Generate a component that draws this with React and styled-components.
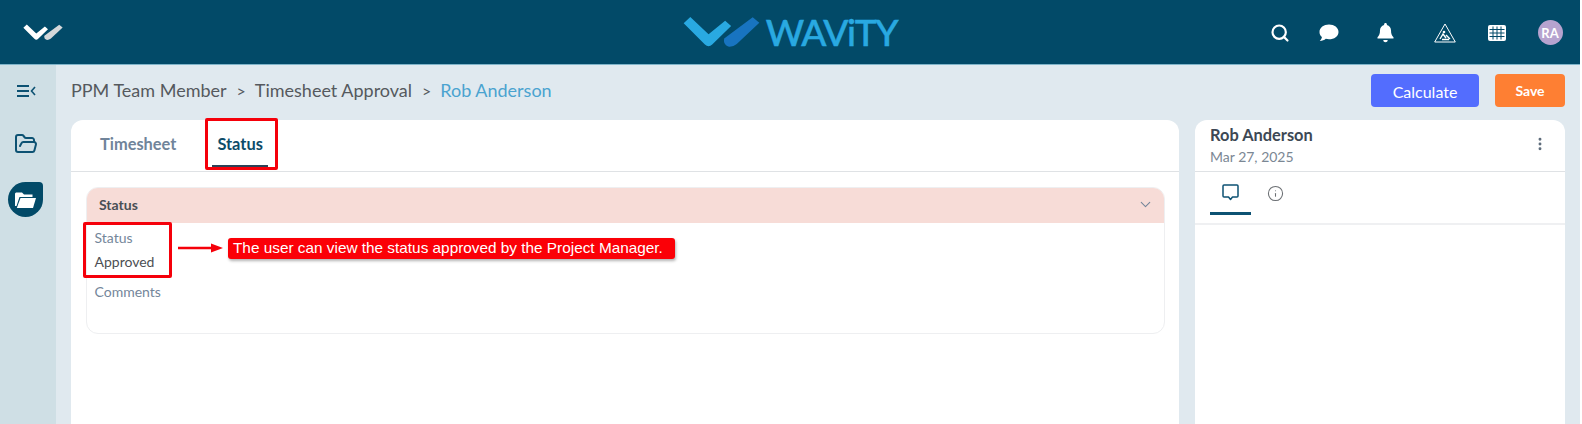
import React from "react";
import styled, { createGlobalStyle } from "styled-components";
import { Search, EllipsisVertical, ChevronDown, Info, FolderOpen } from "lucide-react";

const Global = createGlobalStyle`
  html, body { margin: 0; padding: 0; background: #fff; overflow: hidden; }
  body { font-family: Lato, "Open Sans", sans-serif; }
  * { box-sizing: border-box; }
`;

const Page = styled.div`
  position: relative;
  width: 1580px;
  height: 424px;
  overflow: hidden;
  display: flex;
  flex-direction: column;
`;
const TopBar = styled.header`
  flex: none;
  height: 65px;
  background: #024a68;
  border-bottom: 1px solid #7fb4c9;
  display: grid;
  grid-template-columns: 1fr auto 1fr;
  align-items: center;
`;
const Brand = styled.div`
  display: flex;
  padding-left: 23px;
`;
const CenterLogo = styled.div`
  display: flex;
  align-items: center;
  gap: 6px;
`;
const Word = styled.span`
  font-size: 37px;
  line-height: 40px;
  font-weight: 500;
  color: #29a9e1;
  letter-spacing: -1.3px;
  -webkit-text-stroke: 0.5px #29a9e1;
`;
const TopIcons = styled.div`
  display: flex;
  justify-content: flex-end;
  align-items: center;
`;
const TopSlot = styled.div`
  width: ${(p) => p.$w}px;
  display: flex;
  justify-content: center;
  align-items: center;
  color: #fff;
  padding-top: 1px;
`;
const Avatar = styled.div`
  width: 25px;
  height: 25px;
  border-radius: 50%;
  background: #b6a3cf;
  color: #fff;
  font-size: 13px;
  font-weight: 700;
  display: flex;
  align-items: center;
  justify-content: center;
`;
const Body = styled.div`
  flex: 1;
  display: flex;
  min-height: 0;
`;
const Side = styled.aside`
  flex: none;
  width: 56px;
  background: #cfdfe5;
  display: flex;
  flex-direction: column;
  align-items: center;
  color: #0d5273;
  padding: 17px 0 0 0;
`;
const SideItem = styled.div`
  height: ${(p) => p.$h}px;
  display: flex;
  align-items: center;
  justify-content: center;
  margin-left: -5px;
`;
const ActiveDrop = styled.div`
  width: 35px;
  height: 35px;
  border-radius: 18px 4px 18px 18px;
  background: #024a68;
  display: flex;
  align-items: center;
  justify-content: center;
  margin-left: -6px;
  margin-top: -6px;
`;
const Main = styled.main`
  flex: 1;
  min-width: 0;
  background: #e0e9ef;
  padding: 0 15px 0 15px;
  display: flex;
  flex-direction: column;
`;
const ToolRow = styled.div`
  flex: none;
  height: 55px;
  display: flex;
  align-items: flex-start;
  justify-content: space-between;
  padding-top: 9px;
`;
const Crumbs = styled.nav`
  display: flex;
  align-items: center;
  height: 32px;
  font-size: 18px;
  color: #55595e;
`;
const CrumbSep = styled.span`
  font-size: 16px;
  padding: 0 9px 0 10px;
  color: #55595e;
`;
const CrumbNow = styled.span`
  color: #4aa3d0;
`;
const Actions = styled.div`
  display: flex;
  gap: 16px;
`;
const Btn = styled.button`
  border: none;
  height: 33px;
  border-radius: 4px;
  width: ${(p) => p.$w}px;
  background: ${(p) => p.$bg};
  color: #fff;
  font-family: inherit;
  font-size: ${(p) => p.$fs}px;
  font-weight: ${(p) => p.$fw};
  padding: ${(p) => p.$pt}px 0 0;
`;
const Cards = styled.div`
  flex: 1;
  display: flex;
  gap: 16px;
  min-height: 0;
`;
const Card = styled.section`
  background: #fff;
  border-radius: 12px 12px 0 0;
  display: flex;
  flex-direction: column;
  flex: ${(p) => (p.$w ? `none` : 1)};
  width: ${(p) => (p.$w ? `${p.$w}px` : "auto")};
  min-width: 0;
`;
const TabRow = styled.div`
  flex: none;
  height: 52px;
  border-bottom: 1px solid #dfe2e5;
  display: flex;
  padding-left: 21px;
  gap: ${(p) => p.$gap}px;
`;
const Tab = styled.div`
  height: 47px;
  padding: 2px 5px 0;
  margin-left: ${(p) => (p.$first ? 3 : 0)}px;
  display: flex;
  align-items: center;
  font-size: 16.4px;
  font-weight: 700;
  color: ${(p) => (p.$on ? "#0d4c69" : "#70849a")};
  border-bottom: 2px solid ${(p) => (p.$on ? "#2c4257" : "transparent")};
`;
const Panel = styled.div`
  margin: 15px 14px 0 15px;
  height: 147px;
  border: 1px solid #eeeff1;
  border-radius: 12px;
  overflow: hidden;
`;
const PanelHead = styled.div`
  height: 35px;
  background: #f7dcd7;
  display: flex;
  align-items: center;
  justify-content: space-between;
  padding: 0 10px 2px 12px;
  font-size: 14px;
  font-weight: 700;
  color: #4a4f55;
`;
const PanelBody = styled.div`
  padding: 5px 7.500px;
  display: flex;
  flex-direction: column;
`;
const FieldLabel = styled.div`
  font-size: 14px;
  line-height: 20px;
  color: #74869a;
  margin-top: ${(p) => p.$mt || 0}px;
`;
const FieldValue = styled.div`
  font-size: 14px;
  line-height: 20px;
  margin-top: 4px;
  margin-bottom: 1px;
  color: #4c4f53;
`;
const RightHead = styled.div`
  flex: none;
  height: 52px;
  border-bottom: 1px solid #dfe2e5;
  padding: 5px 15px 0 15px;
  display: flex;
  justify-content: space-between;
`;
const Name = styled.div`
  font-size: 16.4px;
  line-height: 20px;
  font-weight: 700;
  color: #3d4854;
`;
const DateLine = styled.div`
  font-size: 14px;
  line-height: 20px;
  margin-top: 2px;
  color: #7b8794;
`;
const Kebab = styled.div`
  color: #5d6b7a;
  margin-top: 11px;
  margin-right: 2px;
`;
const RightTabs = styled.div`
  flex: none;
  height: 53px;
  border-bottom: 2px solid #eff0f2;
  display: flex;
  padding-left: 15px;
  gap: 4px;
`;
const RightTab = styled.div`
  width: 41px;
  height: 43px;
  padding-top: ${(p) => (p.$on ? 0 : 2)}px;
  display: flex;
  align-items: center;
  justify-content: center;
  color: ${(p) => (p.$on ? "#0d5273" : "#6b6f73")};
  border-bottom: 3px solid ${(p) => (p.$on ? "#0d5273" : "transparent")};
`;
const RedBox = styled.div`
  position: absolute;
  left: ${(p) => p.$x}px;
  top: ${(p) => p.$y}px;
  width: ${(p) => p.$w}px;
  height: ${(p) => p.$h}px;
  border: 3px solid #f5000a;
  border-radius: 2px;
`;
const Callout = styled.div`
  position: absolute;
  left: 228px;
  top: 238px;
  width: 447px;
  height: 21px;
  background: #fb0007;
  border-radius: 3px;
  box-shadow: 1px 2px 3px rgba(0, 0, 0, 0.3);
  color: #fff;
  font-family: "Liberation Sans", Arial, sans-serif;
  font-size: 15.35px;
  line-height: 20px;
  padding-left: 5px;
  white-space: nowrap;
`;
const ArrowSvg = styled.svg`
  position: absolute;
  left: 178px;
  top: 242px;
`;

const LogoMark = ({ width, a, b }) => (
  <svg width={width} viewBox="128 50 232 96" style={{ display: "block" }}>
    <path d="M130 72 L150 53 L205 105 L255 64 L273 80 L216 136 Q205 146 194 136 Z" fill={a} />
    <path d="M252 118 L338 54 L358 70 L290 134 Q278 144 264 142 Q248 136 252 118 Z" fill={b} />
  </svg>
);

export default function App() {
  return (
    <Page>
      <Global />
      <TopBar>
        <Brand>
          <LogoMark width={40} a="#fff" b="#d5d8da" />
        </Brand>
        <CenterLogo>
          <LogoMark width={77} a="#29a9e1" b="#1874c0" />
          <Word>WAViTY</Word>
        </CenterLogo>
        <TopIcons>
          <TopSlot $w={48}>
            <Search size={20} strokeWidth={2.6} />
          </TopSlot>
          <TopSlot $w={50}>
            <svg width="20" height="18" viewBox="0 0 20 18" fill="#fff">
              <path d="M10 .5c5.200 0 9.500 3.200 9.500 7.400s-4.300 7.400-9.500 7.400c-1.100 0-2.200-.15-3.200-.45C5.300 16.200 3.300 17 .8 17c1.200-1.200 2-2.700 2.100-4C1.300 11.700.5 9.900.5 7.900.5 3.700 4.800.5 10 .5z" />
            </svg>
          </TopSlot>
          <TopSlot $w={62}>
            <svg width="17" height="20" viewBox="0 0 17 20" fill="#fff">
              <path d="M8.500 0c.8 0 1.400.6 1.400 1.400v.5c2.500.6 4.100 2.700 4.100 5.300 0 3.800.9 5.200 2.500 7v1.300H.500v-1.300c1.600-1.800 2.500-3.200 2.500-7 0-2.600 1.600-4.700 4.100-5.300v-.5C7.100.6 7.700 0 8.500 0zM6.300 17h4.400c0 1.300-1 2.300-2.200 2.300S6.300 18.300 6.300 17z" />
            </svg>
          </TopSlot>
          <TopSlot $w={58}>
            <svg width="22" height="20" viewBox="0 0 22 20" fill="none" stroke="#fff" strokeWidth="1">
              <path d="M11 1 L21.300 19 H.7 Z" strokeLinejoin="round" />
              <circle cx="10" cy="9" r="1.300" fill="#fff" stroke="none" />
              <path d="M6 16 L9 11 L12 15 M12 12 L16 16 M8 16.500 H15" strokeWidth="1.400" />
            </svg>
          </TopSlot>
          <TopSlot $w={46}>
            <svg width="18" height="16" viewBox="0 0 18 16">
              <rect width="18" height="16" rx="2" fill="#fff" />
              <path d="M1.500 4.500H16.500M1.500 8H16.500M1.500 11.500H16.500M5 1.500V14.500M9 1.500V14.500M13 1.500V14.500" stroke="#024a68" strokeWidth="1" />
            </svg>
          </TopSlot>
          <TopSlot $w={60}>
            <Avatar>RA</Avatar>
          </TopSlot>
        </TopIcons>
      </TopBar>
      <Body>
        <Side>
          <SideItem $h={18}>
            <svg width="20" height="14" viewBox="0 0 20 14" fill="none" stroke="#0d5273" strokeWidth="2">
              <path d="M1 2H13M1 7H13M1 12H13" />
              <path d="M19 3 L15.500 7 L19 11" strokeWidth="1.600" />
            </svg>
          </SideItem>
          <SideItem $h={88}>
            <FolderOpen size={24} strokeWidth={2} />
          </SideItem>
          <ActiveDrop>
            <svg width="21" height="18" viewBox="0 0 21 18" fill="#fff">
              <path d="M1 1.500h6l2 2h8.500v2.500H4.500L1.500 15 0 15V2.500z" />
              <path d="M5.500 7H21l-3 10H1.800z" />
            </svg>
          </ActiveDrop>
        </Side>
        <Main>
          <ToolRow>
            <Crumbs>
              <span>PPM Team Member</span>
              <CrumbSep>&gt;</CrumbSep>
              <span>Timesheet Approval</span>
              <CrumbSep>&gt;</CrumbSep>
              <CrumbNow>Rob Anderson</CrumbNow>
            </Crumbs>
            <Actions>
              <Btn $w={108} $bg="#536dfe" $fs={16} $fw={400} $pt={2}>Calculate</Btn>
              <Btn $w={70} $bg="#fe7f33" $fs={14} $fw={700} $pt={0}>Save</Btn>
            </Actions>
          </ToolRow>
          <Cards>
            <Card>
              <TabRow $gap={31}>
                <Tab $first>Timesheet</Tab>
                <Tab $on>Status</Tab>
              </TabRow>
              <Panel>
                <PanelHead>
                  <span>Status</span>
                  <ChevronDown size={17} color="#74869a" strokeWidth={1.5} />
                </PanelHead>
                <PanelBody>
                  <FieldLabel>Status</FieldLabel>
                  <FieldValue>Approved</FieldValue>
                  <FieldLabel $mt={9}>Comments</FieldLabel>
                </PanelBody>
              </Panel>
            </Card>
            <Card $w={370}>
              <RightHead>
                <div>
                  <Name>Rob Anderson</Name>
                  <DateLine>Mar 27, 2025</DateLine>
                </div>
                <Kebab>
                  <EllipsisVertical size={16} strokeWidth={2.4} />
                </Kebab>
              </RightHead>
              <RightTabs>
                <RightTab $on>
                  <svg width="17" height="17" viewBox="0 0 17 17" fill="none" stroke="#0d5273" strokeWidth="1.500">
                    <path d="M2 1H15Q16 1 16 2V12Q16 13 15 13H10.500L8.500 15.500L6.500 13H2Q1 13 1 12V2Q1 1 2 1Z" strokeLinejoin="round" />
                  </svg>
                </RightTab>
                <RightTab>
                  <Info size={17} strokeWidth={1.5} />
                </RightTab>
              </RightTabs>
            </Card>
          </Cards>
        </Main>
      </Body>
      <RedBox $x={205} $y={118} $w={73} $h={52} />
      <RedBox $x={83} $y={222} $w={89} $h={56} />
      <ArrowSvg width="46" height="12" viewBox="0 0 46 12">
        <path d="M0 6H34" stroke="#f5000a" strokeWidth="2.500" />
        <path d="M33 1.500L45 6L33 10.500Z" fill="#f5000a" />
      </ArrowSvg>
      <Callout>The user can view the status approved by the Project Manager.</Callout>
    </Page>
  );
}
